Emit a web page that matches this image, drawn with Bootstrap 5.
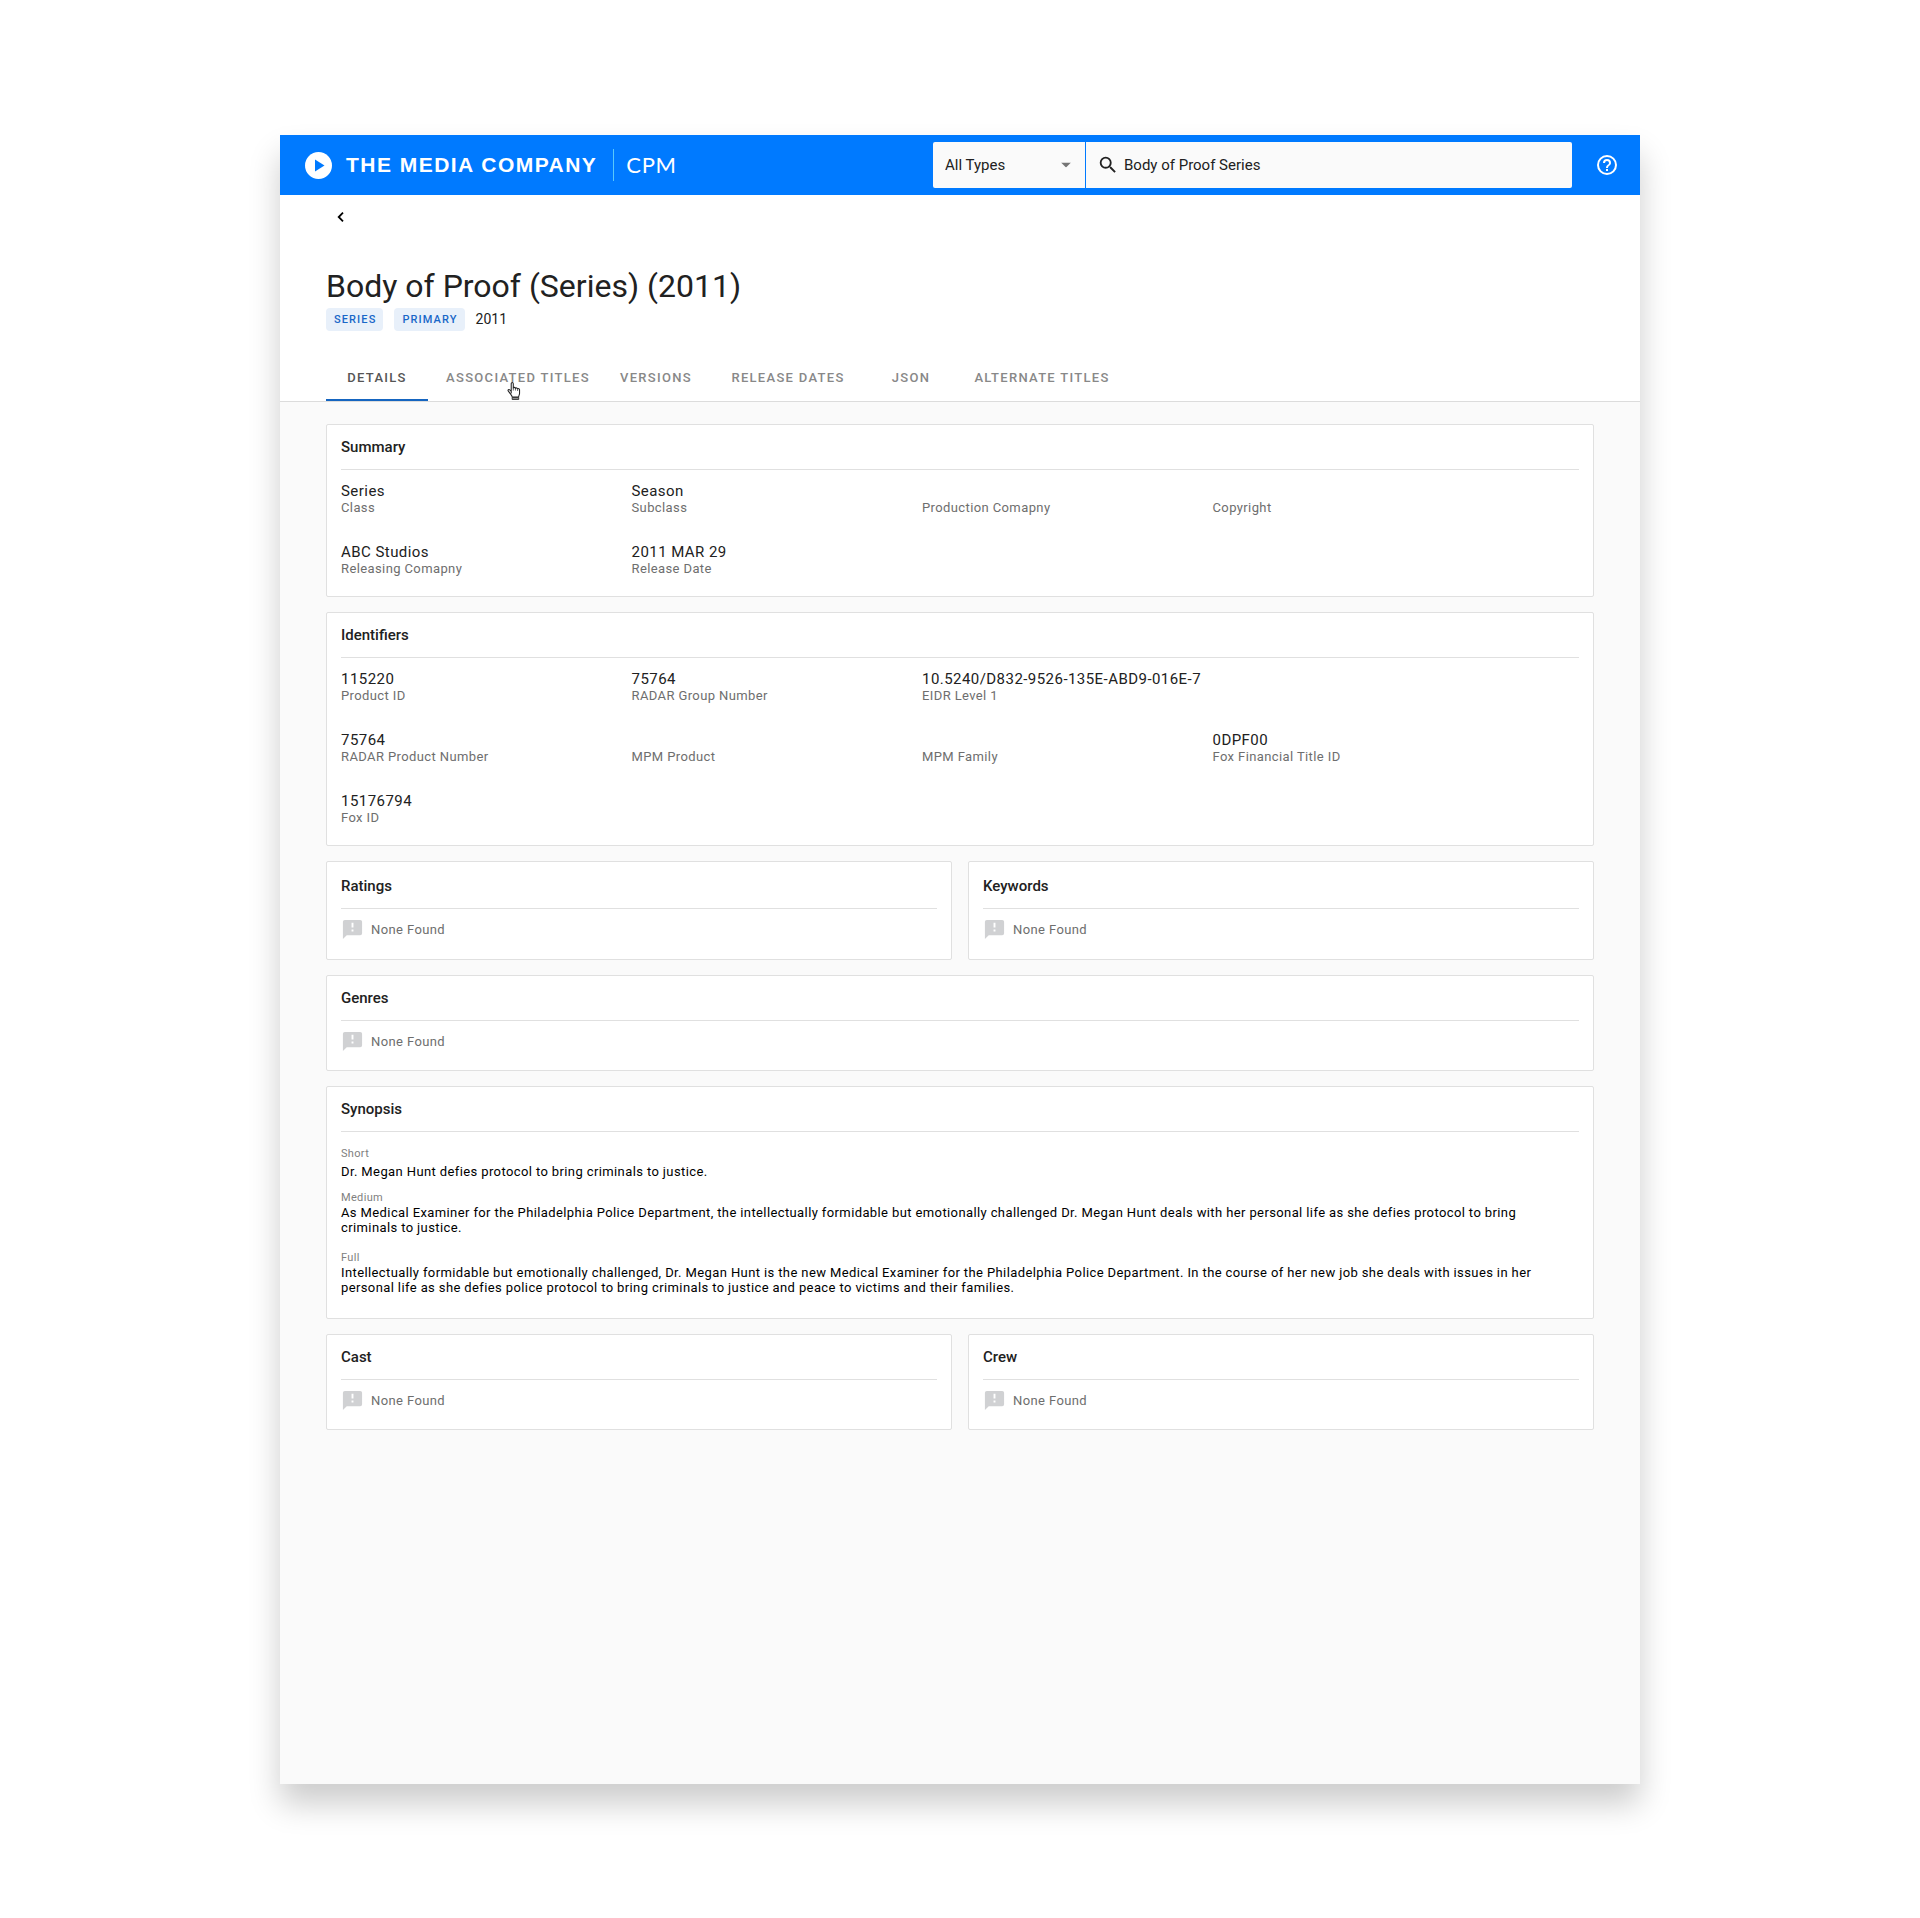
<!DOCTYPE html>
<html lang="en">
<head>
<meta charset="utf-8">
<meta name="viewport" content="width=device-width, initial-scale=1">
<title>Body of Proof (Series) (2011) | CPM</title>
<link href="https://cdn.jsdelivr.net/npm/bootstrap@5.3.0/dist/css/bootstrap.min.css" rel="stylesheet">
<style>
  body { font-family: Roboto, "Liberation Sans", sans-serif; color: #212121; background: #fff; padding: 135px 16px 134px; }
  .app-window { max-width: 1360px; min-height: calc(100vh - 269px); background: #fafafa; box-shadow: 0 20px 30px rgba(0, 0, 0, .2); }

  .app-bar { background: #007aff; min-height: 60px; padding: 0 21px 0 25px; }
  .brand-name { font: bold 21px/28px "Liberation Sans", Arial, sans-serif; letter-spacing: .07em; margin-left: 14px; }
  .brand-rule { width: 1px; height: 32px; background: #5ac8fa; margin: 0 12px 0 16px; }
  .brand-product { font: 22px/28px Lato, sans-serif; letter-spacing: .03em; }
  .search-group { width: 639px; height: 46px; gap: 1px; }
  .search-group .form-select, .search-group .form-control { height: 100%; border: 0; background: #fafafa; font-size: 15px; color: #212121; }
  .type-box { width: 152px; }
  .search-group .type-box .form-select { padding: 0 32px 0 12px; border-radius: 2px 0 0 2px; }
  .type-box svg { right: 14px; pointer-events: none; }
  .search-group .query-box .form-control { padding: 0 12px 0 38px; border-radius: 0 2px 2px 0; }
  .query-box svg { left: 11px; pointer-events: none; }
  .help-btn { width: 24px; height: 24px; margin-left: 23px; }

  .page-head { background: #fff; border-bottom: 1px solid #dcdcdc; padding: 10px 46px 0; }
  .back-btn { width: 24px; height: 24px; margin-left: 2px; }
  .page-title { font-size: 32px; line-height: 40px; font-weight: 400; margin: 37px 0 2px; }
  .meta-line { height: 23px; gap: 11px; font-size: 14px; }
  .tag { height: 23px; line-height: 23px; padding: 0 7px 0 8px; border-radius: 4px; background: #e8f0fa; color: #1967c8; font-size: 11px; font-weight: 500; letter-spacing: .1em; }
  .title-tabs { display: grid; grid-template-columns: 102px 180px 96px 168px 78px 184px; margin-top: 24px; }
  .title-tabs .nav-link { height: 46px; line-height: 46px; padding: 0; text-align: center; white-space: nowrap; font-size: 13px; font-weight: 500; letter-spacing: .1em; color: #888; }
  .title-tabs .nav-link.active { color: #555; border-bottom: 2px solid #1565c0; }
  .pointer-hand { left: 79px; top: 26px; pointer-events: none; }

  .page-body { padding: 22px 46px 40px; gap: 15px; }
  .panel { border: 1px solid #e0e0e0; border-radius: 2px; background: #fff; padding: 0 14px; }
  .panel-title { font-size: 15px; line-height: 44px; font-weight: 500; margin: 0; border-bottom: 1px solid #e0e0e0; }
  .panel-roomy { padding-top: 2px; padding-bottom: 1px; }
  .panel-pair { display: grid; grid-template-columns: 1fr 1fr; gap: 16px; }
  .field-grid { padding: 12px 76px 19px 0; margin: 0; row-gap: 27px; }
  .field-grid dt, .field-grid dd { margin: 0; font-weight: 400; }
  .field-grid dd { font-size: 15px; line-height: 18px; min-height: 18px; letter-spacing: .03em; }
  .field-grid dt { font-size: 13px; line-height: 16px; letter-spacing: .03em; color: #6e6e6e; }
  .none-found { padding: 9px 0 17px; gap: 7px; font-size: 13px; line-height: 23px; letter-spacing: .03em; color: #6e6e6e; }
  .synopsis-list { padding: 14px 34px 23px 0; margin: 0; }
  .synopsis-list dt { font-size: 11px; line-height: 15px; font-weight: 400; letter-spacing: .03em; color: #808080; }
  .synopsis-list dd { font-size: 13px; line-height: 15px; letter-spacing: .03em; margin: 0 0 15px; color: #000; }
  .synopsis-list dd.brief { margin: 3px 0 11px; }
  .synopsis-list dd:last-child { margin-bottom: 0; }
</style>
</head>
<body>
<svg width="0" height="0" class="position-absolute" aria-hidden="true">
  <symbol id="i-note" viewBox="0 0 24 24"><path fill="#d0d1d3" d="M20 2H4a2 2 0 0 0-2 2v18l4-4h14a2 2 0 0 0 2-2V4a2 2 0 0 0-2-2zm-7 12h-2v-2h2v2zm0-4h-2V5h2v5z"/></symbol>
</svg>
<div class="app-window mx-auto">
  <header class="app-bar d-flex align-items-center text-white">
    <a href="#" class="d-flex align-items-center text-white text-decoration-none">
      <svg width="27" height="27" viewBox="0 0 27 27" aria-hidden="true"><circle cx="13.5" cy="13.5" r="13.5" fill="#fff"/><path d="M10 7.500v12l9.500-6z" fill="#007aff"/></svg>
      <span class="brand-name">THE MEDIA COMPANY</span>
      <span class="brand-rule"></span>
      <span class="brand-product">CPM</span>
    </a>
    <form class="search-group d-flex ms-auto" role="search">
      <div class="type-box position-relative flex-shrink-0">
        <select class="form-select" aria-label="Title type"><option>All Types</option></select>
        <svg class="position-absolute top-50 translate-middle-y" width="10" height="5" viewBox="0 0 10 5" aria-hidden="true"><path d="M0 0h10L5 5z" fill="#757575"/></svg>
      </div>
      <div class="query-box position-relative flex-grow-1">
        <svg class="position-absolute top-50 translate-middle-y" width="22" height="22" viewBox="0 0 24 24" aria-hidden="true"><path fill="#212121" d="M15.500 14h-.79l-.28-.27A6.470 6.470 0 0 0 16 9.500 6.500 6.500 0 1 0 9.500 16c1.610 0 3.090-.59 4.230-1.570l.27.28v.79l5 4.990L20.490 19l-4.990-5zm-6 0a4.500 4.500 0 1 1 0-9 4.500 4.500 0 0 1 0 9z"/></svg>
        <input class="form-control" type="text" value="Body of Proof Series" aria-label="Search titles">
      </div>
    </form>
    <button type="button" class="help-btn btn p-0 border-0 d-flex" aria-label="Help">
      <svg width="24" height="24" viewBox="0 0 24 24" aria-hidden="true"><path fill="#fff" d="M11 18h2v-2h-2v2zm1-16a10 10 0 1 0 0 20 10 10 0 0 0 0-20zm0 18a8 8 0 1 1 0-16 8 8 0 0 1 0 16zm0-14a4 4 0 0 0-4 4h2a2 2 0 1 1 4 0c0 2-3 1.750-3 5h2c0-2.250 3-2.500 3-5a4 4 0 0 0-4-4z"/></svg>
    </button>
  </header>

  <div class="page-head">
    <button type="button" class="back-btn btn p-0 border-0 d-flex align-items-center justify-content-center" aria-label="Back">
      <svg width="7" height="10" viewBox="0 0 7 10" aria-hidden="true"><path d="M6 .7L1.700 5 6 9.300" fill="none" stroke="#000" stroke-width="1.800"/></svg>
    </button>
    <h1 class="page-title">Body of Proof (Series) (2011)</h1>
    <div class="meta-line d-flex align-items-center">
      <span class="tag">SERIES</span><span class="tag">PRIMARY</span><span>2011</span>
    </div>
    <nav class="title-tabs" aria-label="Title sections">
      <a class="nav-link active" href="#" aria-current="page">DETAILS</a>
      <a class="nav-link position-relative" href="#">ASSOCIATED TITLES
        <svg class="pointer-hand position-absolute" width="15" height="20" viewBox="0 0 16 20" aria-hidden="true"><path d="M4.500 12V2.200c0-1.600 2.200-1.600 2.200 0v4.600c.3-1 2.200-.9 2.300.4.500-.9 2.200-.6 2.300.6.600-.7 2.100-.3 2.100.9v3.800c0 1.500-1 2.300-1 4H5.500c0-1.500-1.400-2.500-2.300-4L1.300 9.900c-.7-1.300.7-2 1.600-1.200L4.500 10.500z" fill="#fff" stroke="#222" stroke-width="1.100" stroke-linejoin="round"/><path d="M6.700 6.500v3M9 7v2.500M11.300 8v2" stroke="#333" stroke-width=".8"/><path d="M5.500 17h7v2h-7z" fill="#999" stroke="#222" stroke-width=".9"/></svg>
      </a>
      <a class="nav-link" href="#">VERSIONS</a>
      <a class="nav-link" href="#">RELEASE DATES</a>
      <a class="nav-link" href="#">JSON</a>
      <a class="nav-link" href="#">ALTERNATE TITLES</a>
    </nav>
  </div>

  <main class="page-body d-flex flex-column">
    <section class="panel">
      <h2 class="panel-title">Summary</h2>
      <dl class="field-grid row row-cols-4 gx-0">
        <div class="d-flex flex-column-reverse"><dt>Class</dt><dd>Series</dd></div>
        <div class="d-flex flex-column-reverse"><dt>Subclass</dt><dd>Season</dd></div>
        <div class="d-flex flex-column-reverse"><dt>Production Comapny</dt><dd></dd></div>
        <div class="d-flex flex-column-reverse"><dt>Copyright</dt><dd></dd></div>
        <div class="d-flex flex-column-reverse"><dt>Releasing Comapny</dt><dd>ABC Studios</dd></div>
        <div class="d-flex flex-column-reverse"><dt>Release Date</dt><dd>2011 MAR 29</dd></div>
      </dl>
    </section>

    <section class="panel">
      <h2 class="panel-title">Identifiers</h2>
      <dl class="field-grid row row-cols-4 gx-0">
        <div class="d-flex flex-column-reverse"><dt>Product ID</dt><dd>115220</dd></div>
        <div class="d-flex flex-column-reverse"><dt>RADAR Group Number</dt><dd>75764</dd></div>
        <div class="col-6 d-flex flex-column-reverse"><dt>EIDR Level 1</dt><dd>10.5240/D832-9526-135E-ABD9-016E-7</dd></div>
        <div class="d-flex flex-column-reverse"><dt>RADAR Product Number</dt><dd>75764</dd></div>
        <div class="d-flex flex-column-reverse"><dt>MPM Product</dt><dd></dd></div>
        <div class="d-flex flex-column-reverse"><dt>MPM Family</dt><dd></dd></div>
        <div class="d-flex flex-column-reverse"><dt>Fox Financial Title ID</dt><dd>0DPF00</dd></div>
        <div class="d-flex flex-column-reverse"><dt>Fox ID</dt><dd>15176794</dd></div>
      </dl>
    </section>

    <div class="panel-pair">
      <section class="panel panel-roomy">
        <h2 class="panel-title">Ratings</h2>
        <div class="none-found d-flex"><svg width="23" height="23" aria-hidden="true"><use href="#i-note"/></svg>None Found</div>
      </section>
      <section class="panel panel-roomy">
        <h2 class="panel-title">Keywords</h2>
        <div class="none-found d-flex"><svg width="23" height="23" aria-hidden="true"><use href="#i-note"/></svg>None Found</div>
      </section>
    </div>

    <section class="panel">
      <h2 class="panel-title">Genres</h2>
      <div class="none-found d-flex"><svg width="23" height="23" aria-hidden="true"><use href="#i-note"/></svg>None Found</div>
    </section>

    <section class="panel">
      <h2 class="panel-title">Synopsis</h2>
      <dl class="synopsis-list">
        <dt>Short</dt>
        <dd class="brief">Dr. Megan Hunt defies protocol to bring criminals to justice.</dd>
        <dt>Medium</dt>
        <dd>As Medical Examiner for the Philadelphia Police Department, the intellectually formidable but emotionally challenged Dr. Megan Hunt deals with her personal life as she defies protocol to bring criminals to justice.</dd>
        <dt>Full</dt>
        <dd>Intellectually formidable but emotionally challenged, Dr. Megan Hunt is the new Medical Examiner for the Philadelphia Police Department. In the course of her new job she deals with issues in her personal life as she defies police protocol to bring criminals to justice and peace to victims and their families.</dd>
      </dl>
    </section>

    <div class="panel-pair">
      <section class="panel">
        <h2 class="panel-title">Cast</h2>
        <div class="none-found d-flex"><svg width="23" height="23" aria-hidden="true"><use href="#i-note"/></svg>None Found</div>
      </section>
      <section class="panel">
        <h2 class="panel-title">Crew</h2>
        <div class="none-found d-flex"><svg width="23" height="23" aria-hidden="true"><use href="#i-note"/></svg>None Found</div>
      </section>
    </div>
  </main>
</div>
<script src="https://cdn.jsdelivr.net/npm/bootstrap@5.3.0/dist/js/bootstrap.bundle.min.js"></script>
</body>
</html>
